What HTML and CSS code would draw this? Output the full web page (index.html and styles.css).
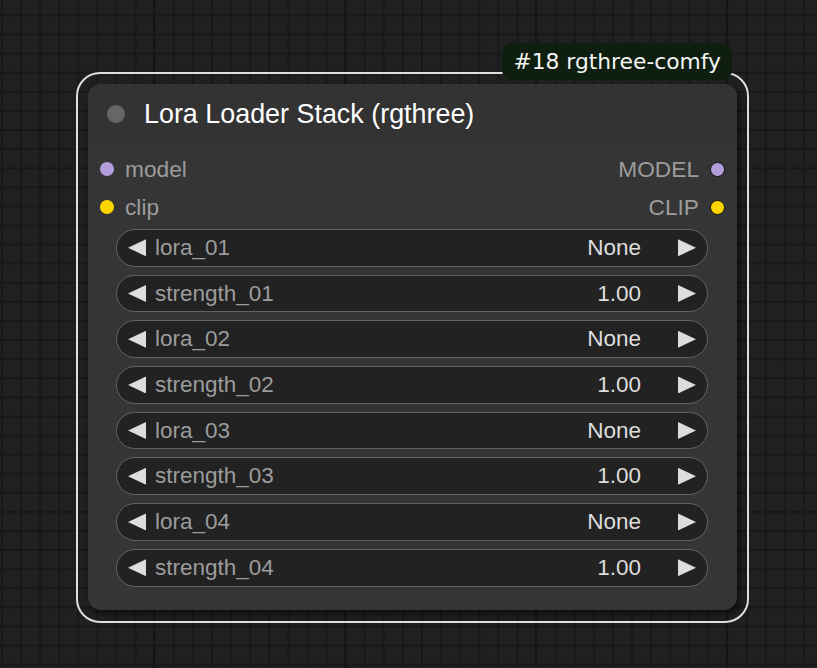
FILE: index.html
```html
<!DOCTYPE html>
<html>
<head>
<meta charset="utf-8">
<link rel="stylesheet" href="styles.css">
</head>
<body>
<div class="canvas">
  <div class="node">
    <div class="badge">#18 rgthree-comfy</div>
    <div class="title">
      <span class="title-dot"></span>
      <span class="title-text">Lora Loader Stack (rgthree)</span>
    </div>
    <div class="slots">
      <div class="slot-row">
        <div class="slot-in"><span class="dot dot-model"></span><span>model</span></div>
        <div class="slot-out"><span>MODEL</span><span class="dot dot-model dot-out"></span></div>
      </div>
      <div class="slot-row">
        <div class="slot-in"><span class="dot dot-clip"></span><span>clip</span></div>
        <div class="slot-out"><span>CLIP</span><span class="dot dot-clip dot-out"></span></div>
      </div>
    </div>
    <div class="widgets">
      <div class="widget"><span class="arrow arrow-l"></span><span class="w-label">lora_01</span><span class="w-value">None</span><span class="arrow arrow-r"></span></div>
      <div class="widget"><span class="arrow arrow-l"></span><span class="w-label">strength_01</span><span class="w-value">1.00</span><span class="arrow arrow-r"></span></div>
      <div class="widget"><span class="arrow arrow-l"></span><span class="w-label">lora_02</span><span class="w-value">None</span><span class="arrow arrow-r"></span></div>
      <div class="widget"><span class="arrow arrow-l"></span><span class="w-label">strength_02</span><span class="w-value">1.00</span><span class="arrow arrow-r"></span></div>
      <div class="widget"><span class="arrow arrow-l"></span><span class="w-label">lora_03</span><span class="w-value">None</span><span class="arrow arrow-r"></span></div>
      <div class="widget"><span class="arrow arrow-l"></span><span class="w-label">strength_03</span><span class="w-value">1.00</span><span class="arrow arrow-r"></span></div>
      <div class="widget"><span class="arrow arrow-l"></span><span class="w-label">lora_04</span><span class="w-value">None</span><span class="arrow arrow-r"></span></div>
      <div class="widget"><span class="arrow arrow-l"></span><span class="w-label">strength_04</span><span class="w-value">1.00</span><span class="arrow arrow-r"></span></div>
    </div>
  </div>
</div>
</body>
</html>
```
FILE: styles.css
```css
html, body {
  margin: 0;
  padding: 0;
  width: 817px;
  height: 668px;
  overflow: hidden;
}
body {
  background-color: #202020;
  background-image:
    linear-gradient(to right, #151515 0, #151515 2px, transparent 2px),
    linear-gradient(to right, #181818 0, #181818 1.5px, transparent 1.5px),
    linear-gradient(to bottom, #181818 0, #181818 1.5px, transparent 1.5px);
  background-size: 191px 668px, 19.1px 19.1px, 19.1px 19.1px;
  background-position: 153px 0, 1px 0, 0 14.5px;
  font-family: "Liberation Sans", Arial, sans-serif;
}
.canvas {
  position: relative;
  width: 817px;
  height: 668px;
}
.node {
  position: absolute;
  left: 88px;
  top: 84px;
  width: 649px;
  height: 526px;
  background: #353535;
  border-radius: 13px;
  box-shadow: 3px 4px 6px rgba(0, 0, 0, 0.55);
  display: flex;
  flex-direction: column;
}
.node::before {
  content: "";
  position: absolute;
  left: -12px;
  top: -12px;
  right: -12px;
  bottom: -13px;
  border: 2px solid #dedede;
  border-radius: 24px;
  pointer-events: none;
}
.badge {
  position: absolute;
  top: -41px;
  right: 5px;
  height: 37px;
  padding: 0 11px;
  background: #0e1e0f;
  border-radius: 10px;
  color: #f4f4f4;
  font-family: "DejaVu Sans", "Noto Sans", sans-serif;
  font-size: 21.8px;
  line-height: 37px;
  z-index: 2;
}
.title {
  height: 57px;
  border-bottom: 1px solid #2c2c2c;
  background: #333333;
  border-radius: 13px 13px 0 0;
  display: flex;
  align-items: center;
  padding-left: 19px;
  padding-top: 1px;
  box-sizing: content-box;
}
.title-dot {
  width: 18px;
  height: 18px;
  border-radius: 50%;
  background: #666666;
  flex: none;
}
.title-text {
  margin-left: 19px;
  color: #ffffff;
  font-size: 26.9px;
  line-height: 30px;
}
.slots {
  padding: 7px 12px 0 12px;
  display: flex;
  flex-direction: column;
}
.slot-row {
  height: 38px;
  display: flex;
  align-items: center;
  justify-content: space-between;
  color: #9c9c9c;
  font-size: 22.7px;
}
.slot-in, .slot-out {
  display: flex;
  align-items: center;
}
.slot-in .dot { margin-right: 11px; }
.slot-out .dot { margin-left: 11px; }
.dot {
  width: 14px;
  height: 14px;
  border-radius: 50%;
  box-sizing: border-box;
  flex: none;
}
.dot-model { background: #b39ddb; }
.dot-clip { background: #ffd500; }
.dot-out {
  width: 15px;
  height: 15px;
  border: 1.5px solid #111;
}
.widgets {
  margin-top: 3px;
  padding: 0 29px 0 28px;
  display: flex;
  flex-direction: column;
  gap: 8px;
}
.widget {
  height: 37.7px;
  box-sizing: border-box;
  border: 1.5px solid #636363;
  border-radius: 19px;
  background: #222222;
  display: flex;
  align-items: center;
  padding: 0 11px 0 11px;
  font-size: 22.5px;
}
.arrow {
  width: 18px;
  height: 17px;
  background: #dddddd;
  flex: none;
}
.arrow-l { clip-path: polygon(0 50%, 100% 0, 100% 100%); }
.arrow-r { clip-path: polygon(0 0, 100% 50%, 0 100%); margin-left: 36px; }
.w-label {
  margin-left: 9px;
  color: #9c9c9c;
}
.w-value {
  margin-left: auto;
  margin-right: 1px;
  color: #dddddd;
}
```
